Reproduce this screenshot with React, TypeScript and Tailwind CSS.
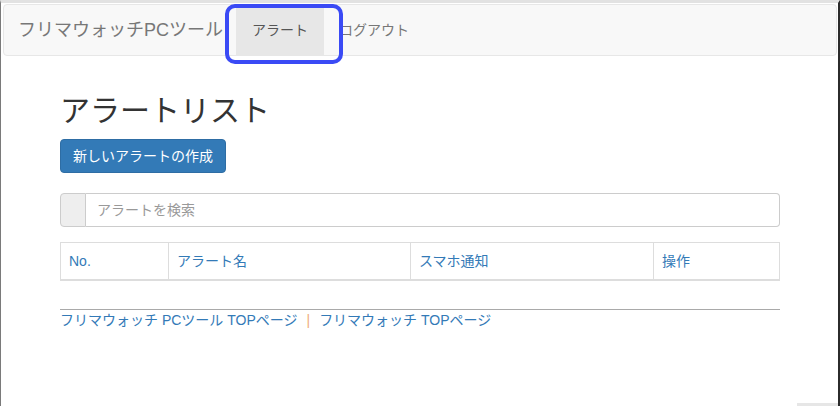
const FONT = { fontFamily: '"Liberation Sans", "Noto Sans CJK JP", sans-serif' };

const COLUMNS = [
  { label: "No.", width: "w-[107px]" },
  { label: "アラート名", width: "w-[242px]" },
  { label: "スマホ通知", width: "w-[243px]" },
  { label: "操作", width: "flex-1" },
];

export default function App() {
  return (
    <div
      className="relative w-[840px] h-[406px] overflow-hidden bg-white border-t-[3px] border-t-[#e2e2e2] border-l border-l-[#7a7a7a] border-r-2 border-r-[#2b2b2b] pl-[2px] pr-[1px] text-[14px] text-[#333]"
      style={FONT}
    >
      {/* navbar */}
      <nav className="mt-px h-[52px] flex items-stretch bg-[#f8f8f8] border border-[#e7e7e7] rounded-[4px]">
        <a className="flex items-center pl-[14px] pr-[15px] text-[18px] text-[#777]">フリマウォッチPCツール</a>
        <a className="flex items-center ml-[-2px] px-[16px] bg-[#e7e7e7] text-[#555]">アラート</a>
        <a className="flex items-center px-[15px] text-[#777]">ログアウト</a>
      </nav>

      {/* main */}
      <div className="w-[720px] ml-[57px]">
        <h1 className="mt-[35px] text-[30px] leading-[40px] text-[#333]">アラートリスト</h1>
        <button className="mt-[8px] h-[34px] px-[12px] rounded-[4px] bg-[#337ab7] border border-[#2e6da4] text-white text-[14px]">
          新しいアラートの作成
        </button>

        <div className="mt-[20px] flex h-[34px]">
          <span className="w-[26px] bg-[#eee] border border-[#ccc] rounded-l-[4px]" />
          <div className="flex-1 flex items-center px-[11px] border border-l-0 border-[#ccc] rounded-r-[4px] text-[#999]">
            アラートを検索
          </div>
        </div>

        <div className="mt-[15px] flex border border-[#ddd] border-b-2">
          {COLUMNS.map((c, i) => (
            <div
              key={c.label}
              className={`${c.width} h-[36px] flex items-center px-[8px] text-[#337ab7] ${i > 0 ? "border-l border-[#ddd]" : ""}`}
            >
              {c.label}
            </div>
          ))}
        </div>

        <div className="mt-[28px] border-t border-[#a9a9a9] flex items-center leading-[20px] text-[#337ab7]">
          <span>フリマウォッチ PCツール TOPページ</span>
          <span className="mx-[9px] text-[#f0ad7e]">|</span>
          <span>フリマウォッチ TOPページ</span>
        </div>
      </div>

      {/* highlight annotation */}
      <div className="absolute left-[224px] top-[1px] w-[118px] h-[60px] border-4 border-[#3a4af5] rounded-[10px]" />
      <div className="absolute right-0 bottom-0 w-[41px] h-[3px] bg-[#e6e6e6]" />
    </div>
  );
}
